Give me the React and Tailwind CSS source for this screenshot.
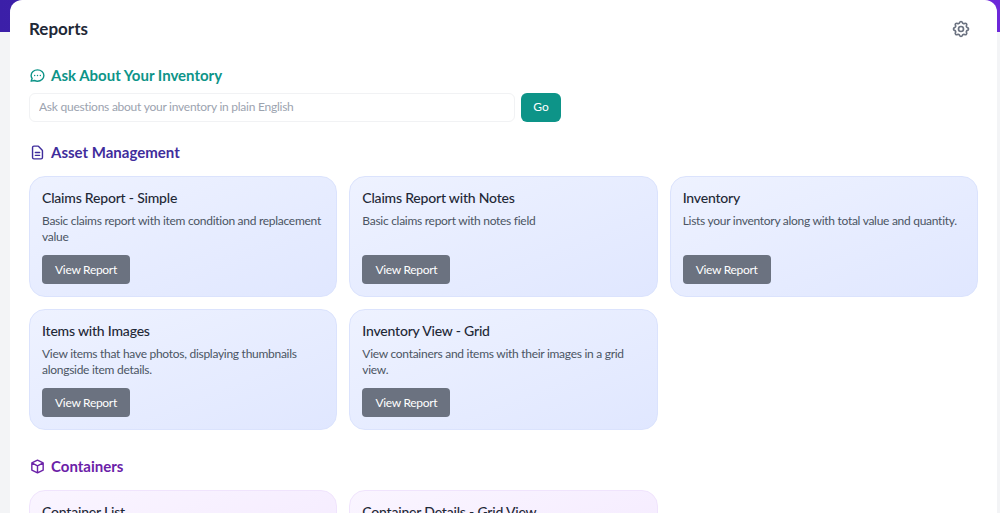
import React from 'react';
import { HiOutlineCog, HiOutlineChat, HiOutlineDocumentText, HiOutlineCube } from 'react-icons/hi';

function ReportCard({ title, desc, tone }) {
    const toneClass = tone === 'purple'
        ? 'from-[#faf5ff] to-[#f3e8ff] border-[#f0e4fd]'
        : 'from-[#eef2ff] to-[#e0e7ff] border-[#dbe3fd]';
    return (
        <div className={`rounded-2xl border bg-gradient-to-br px-[12px] pt-[11px] pb-[12px] flex flex-col ${toneClass}`}>
            <h3 className="text-[14px] leading-[20px] tracking-[-0.2px] font-medium text-[#1f2937]">{title}</h3>
            <p className="mt-[5px] text-[12px] leading-[16px] tracking-[-0.28px] text-[#4b5563] h-[32px]">{desc}</p>
            <button className="mt-[10px] self-start h-[29px] w-[88px] rounded bg-[#6b7280] text-white text-[12px] tracking-[-0.3px] flex items-center justify-center">
                View Report
            </button>
        </div>
    );
}

function SectionTitle({ icon: Icon, color, children }) {
    return (
        <div className={`flex items-center gap-[5px] ${color}`}>
            <Icon size={17} />
            <h2 className="text-[15px] leading-[20px] font-bold">{children}</h2>
        </div>
    );
}

export default function App() {
    return (
        <div className="h-[513px] overflow-hidden bg-[#f3f4f6]" style={{ fontFamily: 'Lato, sans-serif' }}>
            <div className="h-8 bg-gradient-to-r from-[#3b1fa8] to-[#6d28d9]"></div>
            <div className="-mt-8 ml-[10px] mr-[3px] bg-white rounded-t-xl px-[19px] pt-[19px] pb-8">
                <div className="flex items-center justify-between">
                    <h1 className="text-[17px] leading-[20px] font-bold text-[#1f2937]">Reports</h1>
                    <HiOutlineCog size={20} className="text-[#6b7280] mr-[7px]" />
                </div>

                <div className="mt-[26px]">
                    <SectionTitle icon={HiOutlineChat} color="text-[#0d9488]">Ask About Your Inventory</SectionTitle>
                    <div className="mt-[8px] flex gap-[6px]">
                        <input
                            placeholder="Ask questions about your inventory in plain English"
                            className="w-[486px] h-[29px] rounded-md border border-[#f1f2f4] px-[9px] pb-[2px] text-[12px] tracking-[-0.25px] placeholder:text-[#9ca3af]"
                        />
                        <button className="w-[40px] h-[29px] rounded-md bg-[#0d9488] text-white text-[12px] pb-[1px]">Go</button>
                    </div>
                </div>

                <div className="mt-[20px]">
                    <SectionTitle icon={HiOutlineDocumentText} color="text-[#3f2d9c]">Asset Management</SectionTitle>
                    <div className="mt-[14px] grid grid-cols-3 gap-[12px]">
                        <ReportCard title="Claims Report - Simple" desc="Basic claims report with item condition and replacement value" />
                        <ReportCard title="Claims Report with Notes" desc="Basic claims report with notes field" />
                        <ReportCard title="Inventory" desc="Lists your inventory along with total value and quantity." />
                        <ReportCard title="Items with Images" desc="View items that have photos, displaying thumbnails alongside item details." />
                        <ReportCard title="Inventory View - Grid" desc="View containers and items with their images in a grid view." />
                    </div>
                </div>

                <div className="mt-[26px]">
                    <SectionTitle icon={HiOutlineCube} color="text-[#6b21a8]">Containers</SectionTitle>
                    <div className="mt-[14px] grid grid-cols-3 gap-[12px]">
                        <ReportCard tone="purple" title="Container List" desc="" />
                        <ReportCard tone="purple" title="Container Details - Grid View" desc="" />
                    </div>
                </div>
            </div>
        </div>
    );
}
